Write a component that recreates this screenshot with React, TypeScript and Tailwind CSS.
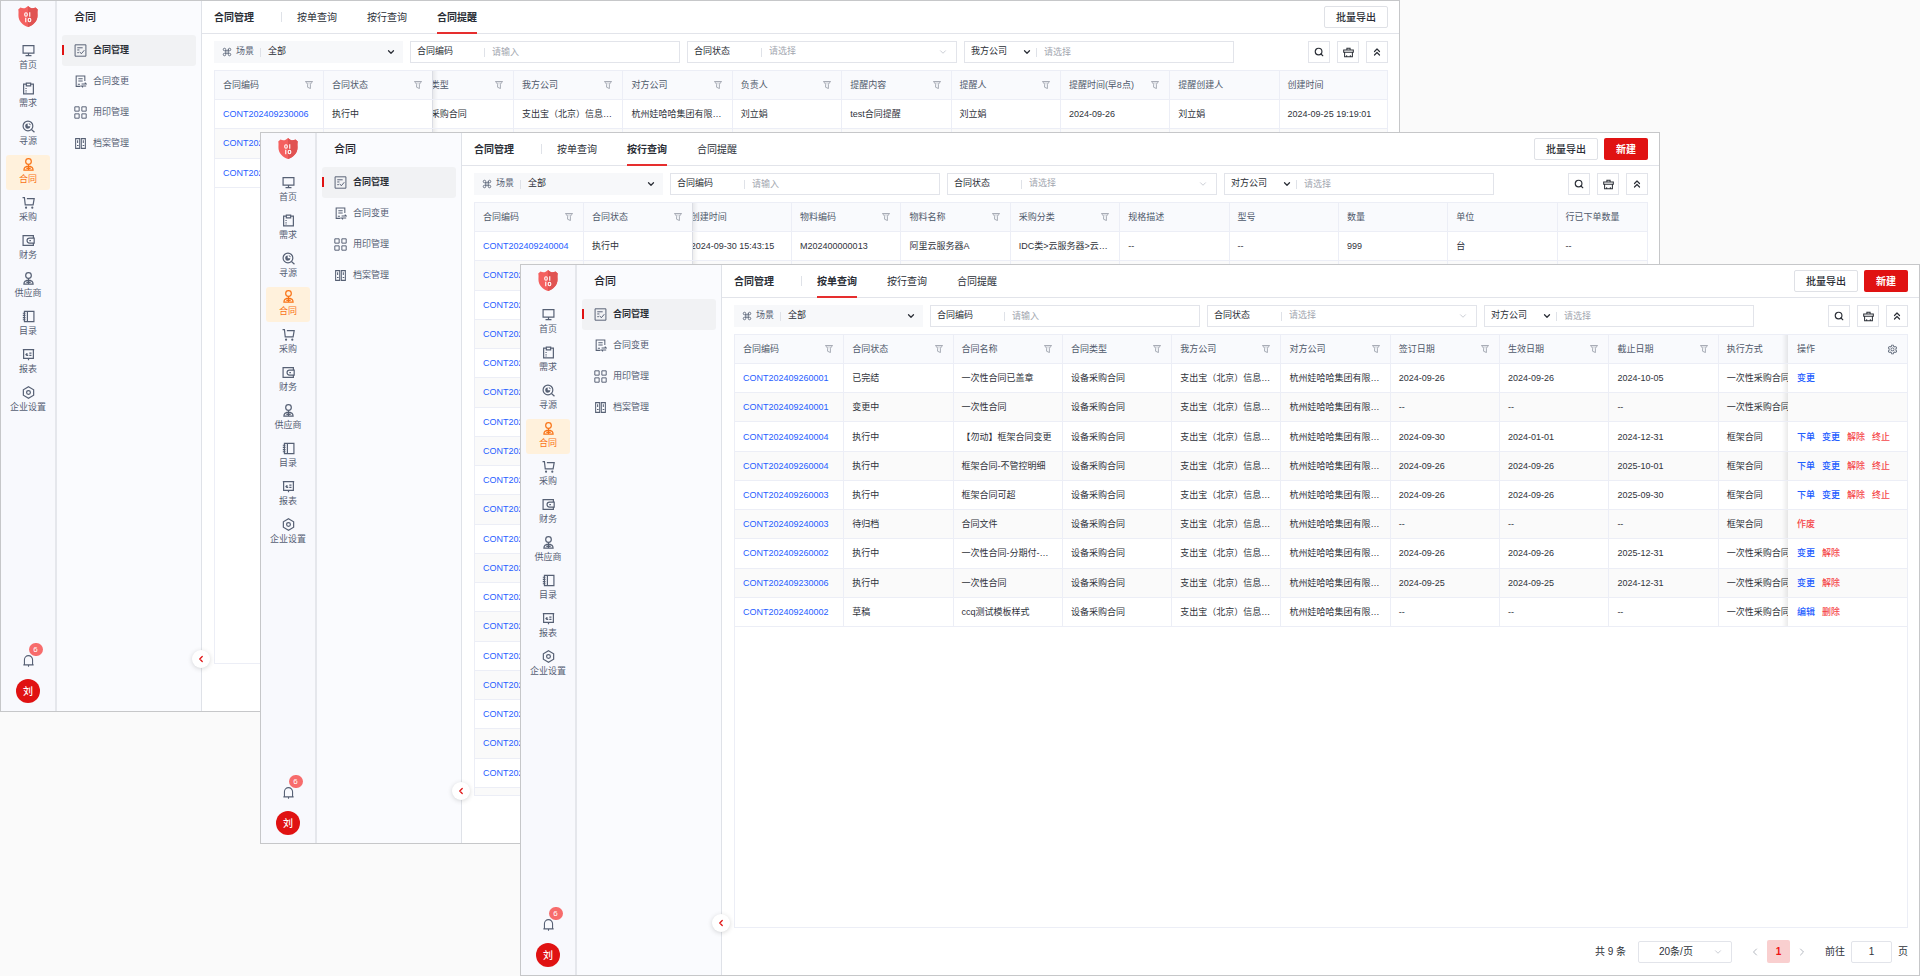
import { ReactNode, useId, useLayoutEffect, useRef } from "react";
import { ChevronDown, ChevronLeft, ChevronRight, ChevronsUp, Command, Search } from "lucide-react";
import { AiOutlineSetting } from "react-icons/ai";
import clsx from "clsx";

type Action = { label: string; danger?: boolean };
type Column = { title: string; filter?: boolean };
type Row = { cells: string[]; actions?: Action[] };

type WindowProps = {
  className: string;
  activeTab: string;
  companyField: string;
  canCreate?: boolean;
  columns: Column[];
  rows: Row[];
  tableClass: string;
  pinLeft?: boolean;
  scrollX?: number;
};

const tabs = ["按单查询", "按行查询", "合同提醒"];

const order: Action = { label: "下单" };
const change: Action = { label: "变更" };
const release: Action = { label: "解除", danger: true };
const stop: Action = { label: "终止", danger: true };

const us = "支出宝（北京）信息技术有限公司";
const them = "杭州娃哈哈集团有限公司";

function Svg({ children, className = "size-[13px]" }: { children: ReactNode; className?: string }) {
  return (
    <svg viewBox="0 0 24 24" fill="none" stroke="currentColor" strokeWidth="2.2" className={className} aria-hidden="true">
      {children}
    </svg>
  );
}

const personIcon = (
  <Svg>
    <circle cx="12" cy="6.5" r="5.2" />
    <path d="M12 12v3.500M8 15.500h8M3.500 22.500c0-4.500 2.500-7 8.500-7s8.500 2.500 8.500 7zM8 19h8M12 16v6.500" />
  </Svg>
);

const navItems: { label: string; icon: ReactNode }[] = [
  { label: "首页", icon: <Svg><path d="M2 3h20v14H2zM12 17v4M6.5 21.5h11" /></Svg> },
  { label: "需求", icon: <Svg><path d="M8 4H3v18h18V4h-5M8 2h8v5H8zM7.5 11v2M7.5 15v2M7.5 18v1.5" /></Svg> },
  {
    label: "寻源",
    icon: (
      <Svg>
        <circle cx="11" cy="11" r="9" />
        <path d="M17.5 17.5 23 22.5" />
        <path d="M10.500 6.500v5h5a4.800 4.800 0 1 1-5-5z" fill="currentColor" stroke="none" />
        <path d="M12.500 6.500a4 4 0 0 1 3 3" strokeWidth="1.800" />
      </Svg>
    ),
  },
  { label: "合同", icon: personIcon },
  {
    label: "采购",
    icon: (
      <Svg>
        <path d="M1 3h3.5l1.5 13.5h14.5L22.500 5H9" />
        <circle cx="7.500" cy="21.500" r=".9" />
        <circle cx="19" cy="21.500" r=".9" />
      </Svg>
    ),
  },
  {
    label: "财务",
    icon: (
      <Svg>
        <path d="M21 7.500V3H2v18h19v-4M22.500 7.500H14a4.700 4.700 0 0 0 0 9.400h8.500zM13.500 12.200h3" />
      </Svg>
    ),
  },
  { label: "供应商", icon: personIcon },
  { label: "目录", icon: <Svg><path d="M4.500 2.500H22v19H4.500zM10 2.500v19M1.500 6h5M1.500 10h5M1.500 14h5M1.500 18h5" /></Svg> },
  {
    label: "报表",
    icon: <Svg><path d="M1.500 3h21M3 3.500V19h18V3.500M12 19v3.500M9 9v4.500M6.500 11.500 9 13.500h2.500M13.500 9.500h4M13.500 13.500h4" /></Svg>,
  },
  {
    label: "企业设置",
    icon: (
      <Svg>
        <path d="M12 1.500 21.500 7v10L12 22.500 2.500 17V7z" />
        <circle cx="12" cy="12" r="3.500" />
      </Svg>
    ),
  },
];

const menuItems: { label: string; icon: ReactNode }[] = [
  {
    label: "合同管理",
    icon: (
      <Svg>
        <path d="M2 1.500h20v21H2zM6 7h10M6 11h4M6 16h3" strokeWidth="1.800" />
        <path d="m10.500 14.500 3 3.500 5.500-6.500" strokeWidth="1.800" />
      </Svg>
    ),
  },
  {
    label: "合同变更",
    icon: <Svg><path d="M20 11V2H4v19h8M8 7h8M8 11h8M7 17h4M14 16.500h8.500l-2.500-2.500M22.500 20.500H14l2.500 2.500" strokeWidth="1.900" /></Svg>,
  },
  {
    label: "用印管理",
    icon: <Svg><path d="M1.500 1.500h8v8h-8zM14.500 1.500h8v8h-8zM1.500 14.500h8v8h-8zM14.500 14.500h8v8h-8z" strokeWidth="1.800" /></Svg>,
  },
  {
    label: "档案管理",
    icon: <Svg><path d="M3 3h7.500v18H3zM13.500 3H21v18h-7.500zM6.700 6v5M17.200 6v5M5.500 15.500h3M16 15.500h3" strokeWidth="1.900" /></Svg>,
  },
];

function Logo() {
  return (
    <svg viewBox="0 0 40 42" className="h-[21px] w-5" role="img" aria-label="logo">
      <path d="M20 0c3.500 3.500 6 4.500 9 4.500 2.500 0 4-.5 6-1.500l4.500 4c-.8 3-.6 7-.4 11.500C39.500 30 31 38 20 42 9 38 .5 30 .9 18.500 1.100 14 1.300 10 .5 7L5 3c2 1 3.500 1.500 6 1.500 3 0 5.500-1 9-4.500z" fill="#f4605f" />
      <path d="M20 0c3.500 3.500 6 4.500 9 4.500 2.500 0 4-.5 6-1.500l4.500 4c-.8 3-.6 7-.4 11.500C39.500 30 31 38 20 42z" fill="#e05352" />
      <g fill="none" stroke="#fff" strokeWidth="2.200">
        <rect x="13.500" y="13.500" width="5" height="7" rx="2.500" />
        <path d="M23.500 12.500v9M15.500 23.500v9" />
        <rect x="20.500" y="24.500" width="5" height="7" rx="2.500" />
      </g>
    </svg>
  );
}

function FunnelIcon() {
  return (
    <svg viewBox="0 0 16 16" fill="none" stroke="#7b8290" strokeWidth="1.3" className="size-2 shrink-0" aria-hidden="true">
      <path d="M1 1h14l-4.200 5.500v8.500l-5.600-2.500v-6z" />
      <path d="M4 4h8" strokeWidth=".8" />
    </svg>
  );
}

function Rail() {
  return (
    <nav className="flex w-14 shrink-0 flex-col items-center border-r-2 border-[#e5e7ec] bg-[#f8f9fd] pt-[5px] pb-2 text-[#566074]">
      <Logo />
      <ul className="mt-[14px] flex flex-col gap-[3px]">
        {navItems.map(item => (
          <li key={item.label}>
            <a
              href="#"
              className={clsx(
                "flex h-[35px] w-11 flex-col items-center gap-0.5 rounded-[3px] pt-[3px] text-[9px] leading-3 whitespace-nowrap",
                item.label === "合同" && "bg-[#fff1dc] text-[#f97316]"
              )}
            >
              {item.icon}
              {item.label}
            </a>
          </li>
        ))}
      </ul>
      <button aria-label="消息" className="relative mt-auto">
        <Svg>
          <path d="M4.500 20V10.500a7.500 7.500 0 0 1 15 0V20M2.500 20h19M12 20v3.500" strokeWidth="2" />
        </Svg>
        <span className="absolute -top-[11px] left-[7px] flex h-[13px] w-[14px] items-center justify-center rounded-full bg-[#f76c6c] text-[8px] text-white">6</span>
      </button>
      <button className="mt-3 size-6 rounded-full bg-[#e01212] text-[10px] font-medium text-white">刘</button>
    </nav>
  );
}

function SideMenu() {
  return (
    <aside className="relative w-[145px] shrink-0 border-r border-[#dfe2e8] bg-[#fafbfe]">
      <h2 className="h-[34px] pl-[17px] text-[11px] leading-8 font-medium text-[#23262d]">合同</h2>
      <ul className="px-[5px]">
        {menuItems.map((item, i) => (
          <li key={item.label}>
            <a
              href="#"
              className={clsx(
                "relative flex h-[31px] items-center gap-1.5 rounded-[3px] pl-3 text-[9px] text-[#566074]",
                i === 0 && "bg-[#f1f2f4]"
              )}
            >
              {i === 0 && <span className="absolute top-[10px] left-0 h-[10px] w-0.5 bg-[#e01212]" />}
              {item.icon}
              <span className={clsx(i === 0 && "font-bold text-[#2a2e36]")}>{item.label}</span>
            </a>
          </li>
        ))}
      </ul>
      <button
        aria-label="收起"
        className="absolute -right-[9px] bottom-[43px] z-10 flex size-[18px] items-center justify-center rounded-full bg-white text-[#e01212] shadow-[0_1px_5px_rgba(0,0,0,0.16)]"
      >
        <ChevronLeft className="size-[10px]" strokeWidth={3} />
      </button>
    </aside>
  );
}

function Divider() {
  return <span className="h-[9px] w-px shrink-0 bg-[#dfe2e8]" />;
}

const fieldBox = "flex h-[22px] w-[270px] min-w-0 items-center border border-[#e2e4ea] bg-white pl-1.5";
const iconButton = "flex size-[22px] shrink-0 items-center justify-center border border-[#e2e4ea] bg-white text-[#2a2e36]";

function FilterBar({ companyField }: { companyField: string }) {
  const id = useId();
  return (
    <form className="flex items-center gap-[7px] pt-[7px] text-[9px] text-[#2a2e36]">
      <div className="relative flex h-[22px] w-[189px] min-w-0 items-center bg-[#f7f8fa] pl-2">
        <Command className="mr-1 size-[10px] text-[#566074]" />
        <label htmlFor={id + "scene"} className="mr-1.5 shrink-0 text-[#566074]">场景</label>
        <Divider />
        <select id={id + "scene"} className="h-full min-w-0 flex-1 appearance-none pl-[7px]">
          <option>全部</option>
        </select>
        <ChevronDown className="pointer-events-none absolute right-[7px] size-[10px]" strokeWidth={3} />
      </div>
      <div className={fieldBox}>
        <label htmlFor={id + "code"} className="w-[67px] shrink-0">合同编码</label>
        <Divider />
        <input id={id + "code"} placeholder="请输入" className="h-full min-w-0 flex-1 pl-[7px] outline-none placeholder:text-[#a3a7b0]" />
      </div>
      <div className={clsx(fieldBox, "relative")}>
        <label htmlFor={id + "status"} className="w-[67px] shrink-0">合同状态</label>
        <Divider />
        <select id={id + "status"} className="h-full min-w-0 flex-1 appearance-none pl-[7px] text-[#a3a7b0]">
          <option>请选择</option>
        </select>
        <ChevronDown className="pointer-events-none absolute right-2 size-[10px] text-[#c0c4cc]" />
      </div>
      <div className={fieldBox}>
        <div className="relative flex h-full w-[65px] shrink-0 items-center">
          <select aria-label="公司类型" className="h-full w-full appearance-none">
            <option>{companyField}</option>
          </select>
          <ChevronDown className="pointer-events-none absolute right-1 size-[10px]" strokeWidth={3} />
        </div>
        <Divider />
        <input aria-label={companyField} placeholder="请选择" className="h-full min-w-0 flex-1 pl-[7px] outline-none placeholder:text-[#a3a7b0]" />
      </div>
      <div className="ml-auto flex gap-[7px]">
        <button type="button" aria-label="搜索" className={iconButton}>
          <Search className="size-[10px]" strokeWidth={2.8} />
        </button>
        <button type="button" aria-label="清空" className={iconButton}>
          <Svg className="size-[11px]">
            <path d="M8.500 6V2.500h7V6M1.500 6.500h21v5h-21zM3.500 11.500v10h17v-10M8 18v3M16 18v3" />
          </Svg>
        </button>
        <button type="button" aria-label="收起筛选" className={iconButton}>
          <ChevronsUp className="size-3" strokeWidth={2.4} />
        </button>
      </div>
    </form>
  );
}

const pinFirst = "sticky left-0 z-10";
const pinSecond =
  "sticky left-[109px] z-10 after:absolute after:inset-y-0 after:left-full after:w-1.5 after:bg-linear-to-r after:from-black/8 after:to-transparent after:content-['']";
const pinAction =
  "sticky right-0 z-10 before:absolute before:inset-y-0 before:right-full before:w-1.5 before:bg-linear-to-l before:from-black/8 before:to-transparent before:content-['']";

function ContractTable({ columns, rows, tableClass, pinLeft, scrollX = 0 }: Pick<WindowProps, "columns" | "rows" | "tableClass" | "pinLeft" | "scrollX">) {
  const box = useRef<HTMLDivElement>(null);
  const hasActions = rows.some(r => r.actions);

  useLayoutEffect(() => {
    if (box.current) box.current.scrollLeft = scrollX;
  }, [scrollX]);

  const pin = (i: number) => (pinLeft && i === 0 ? pinFirst : pinLeft && i === 1 ? pinSecond : "truncate");

  return (
    <div ref={box} className="mt-[7px] min-h-0 flex-1 overflow-hidden border border-[#eceef6]">
      <table className={clsx("table-fixed border-separate border-spacing-0 text-left text-[9px] leading-3 text-[#2f333b]", tableClass)}>
        <thead>
          <tr>
            {columns.map((c, i) => (
              <th key={c.title} className={clsx("h-[29px] border-r border-b border-[#eceef6] bg-[#f9fafd] px-2 font-normal text-[#4f596b]", pin(i))}>
                <div className="flex items-center justify-between pr-0.5">
                  {c.title}
                  {c.filter && <FunnelIcon />}
                </div>
              </th>
            ))}
            {hasActions && (
              <th className={clsx("h-[29px] w-[119px] border-b border-[#eceef6] bg-[#f9fafd] px-[9px] font-normal text-[#4f596b]", pinAction)}>
                <div className="flex items-center justify-between">
                  操作
                  <AiOutlineSetting className="size-[11px]" />
                </div>
              </th>
            )}
          </tr>
        </thead>
        <tbody>
          {rows.map((r, n) => {
            const cell = clsx("h-[29px] border-b border-[#eceef6]", n % 2 ? "bg-[#fafafa]" : "bg-white");
            return (
              <tr key={n}>
                {columns.map((c, i) => (
                  <td key={c.title} className={clsx(cell, "border-r px-2", pin(i))}>
                    {i === 0 ? <a href="#" className="text-[#1f5eff]">{r.cells[0]}</a> : r.cells[i]}
                  </td>
                ))}
                {hasActions && (
                  <td className={clsx(cell, "px-[9px]", pinAction)}>
                    <div className="flex gap-[7px] font-medium">
                      {r.actions?.map(a => (
                        <button key={a.label} className={a.danger ? "text-[#f5474a]" : "text-[#1f5eff]"}>{a.label}</button>
                      ))}
                    </div>
                  </td>
                )}
              </tr>
            );
          })}
        </tbody>
      </table>
    </div>
  );
}

function Pagination({ total }: { total: number }) {
  const id = useId();
  return (
    <footer className="flex shrink-0 items-center justify-end py-3 text-[10px] text-[#2f333b]">
      <span>共 {total} 条</span>
      <div className="relative ml-3 flex h-[22px] w-[94px] items-center rounded-xs border border-[#e2e4ea]">
        <select aria-label="每页条数" className="h-full w-full appearance-none pl-5">
          <option>20条/页</option>
        </select>
        <ChevronDown className="pointer-events-none absolute right-2 size-[10px] text-[#c0c4cc]" />
      </div>
      <button aria-label="上一页" className="mr-1.5 ml-[17px] text-[#b4b8c0]"><ChevronLeft className="size-3" /></button>
      <button className="size-[23px] rounded-xs bg-[#f9cfcf] font-bold text-[#f01414]">1</button>
      <button aria-label="下一页" className="mr-[17px] ml-1.5 text-[#b4b8c0]"><ChevronRight className="size-3" /></button>
      <label htmlFor={id}>前往</label>
      <input id={id} defaultValue="1" className="mx-1.5 h-[22px] w-[41px] rounded-xs border border-[#e2e4ea] text-center outline-none" />
      <span>页</span>
    </footer>
  );
}

function ContractWindow({ className, activeTab, companyField, canCreate, ...table }: WindowProps) {
  return (
    <section className={clsx("absolute isolate flex overflow-hidden border border-[#c6c7c9] bg-white", className)}>
      <Rail />
      <SideMenu />
      <main className="flex min-w-0 flex-1 flex-col">
        <header className="flex h-[33px] shrink-0 items-center border-b border-[#e2e4ea] pr-[11px] pl-3 text-[10px] text-[#2a2e36]">
          <h1 className="font-bold">合同管理</h1>
          <span className="mr-[15px] ml-[27px] h-[10px] w-px bg-[#dfe2e8]" />
          <div role="tablist" className="flex h-[33px] gap-[30px]">
            {tabs.map(t => (
              <button
                key={t}
                role="tab"
                aria-selected={t === activeTab}
                className={clsx("border-b-2 pt-0.5", t === activeTab ? "border-[#e62e2e] font-bold" : "border-transparent")}
              >
                {t}
              </button>
            ))}
          </div>
          <div className="ml-auto flex gap-1.5">
            <button className="h-[22px] w-16 rounded-xs border border-[#dfe1e6] font-medium">批量导出</button>
            {canCreate && <button className="h-[22px] w-11 rounded-xs bg-[#e01212] font-bold text-white">新建</button>}
          </div>
        </header>
        <div className="flex min-h-0 flex-1 flex-col pr-[11px] pl-3">
          <FilterBar companyField={companyField} />
          <ContractTable {...table} />
          <Pagination total={table.rows.length} />
        </div>
      </main>
    </section>
  );
}

const remindColumns: Column[] = [
  { title: "合同编码", filter: true },
  { title: "合同状态", filter: true },
  { title: "合同类型", filter: true },
  { title: "我方公司", filter: true },
  { title: "对方公司", filter: true },
  { title: "负责人", filter: true },
  { title: "提醒内容", filter: true },
  { title: "提醒人", filter: true },
  { title: "提醒时间(早8点)", filter: true },
  { title: "提醒创建人" },
  { title: "创建时间" },
];

const remindRows: Row[] = [
  { cells: ["CONT202409230006", "执行中", "设备采购合同", us, them, "刘立娟", "test合同提醒", "刘立娟", "2024-09-26", "刘立娟", "2024-09-25 19:19:01"] },
  { cells: ["CONT202409230006"] },
  { cells: ["CONT202409230006"] },
];

const lineColumns: Column[] = [
  { title: "合同编码", filter: true },
  { title: "合同状态", filter: true },
  { title: "创建时间" },
  { title: "物料编码", filter: true },
  { title: "物料名称", filter: true },
  { title: "采购分类", filter: true },
  { title: "规格描述" },
  { title: "型号" },
  { title: "数量" },
  { title: "单位" },
  { title: "行已下单数量" },
];

const lineRows: Row[] = [
  { cells: ["CONT202409240004", "执行中", "2024-09-30 15:43:15", "M202400000013", "阿里云服务器A", "IDC类>云服务器>云主机", "--", "--", "999", "台", "--"] },
  ...Array.from({ length: 19 }, () => ({ cells: ["CONT202409240004"] })),
];

const orderColumns: Column[] = [
  { title: "合同编码", filter: true },
  { title: "合同状态", filter: true },
  { title: "合同名称", filter: true },
  { title: "合同类型", filter: true },
  { title: "我方公司", filter: true },
  { title: "对方公司", filter: true },
  { title: "签订日期", filter: true },
  { title: "生效日期", filter: true },
  { title: "截止日期", filter: true },
  { title: "执行方式" },
];

const kind = "设备采购合同";

const orderRows: Row[] = [
  { cells: ["CONT202409260001", "已完结", "一次性合同已盖章", kind, us, them, "2024-09-26", "2024-09-26", "2024-10-05", "一次性采购合同"], actions: [change] },
  { cells: ["CONT202409240001", "变更中", "一次性合同", kind, us, them, "--", "--", "--", "一次性采购合同"], actions: [] },
  { cells: ["CONT202409240004", "执行中", "【勿动】框架合同变更", kind, us, them, "2024-09-30", "2024-01-01", "2024-12-31", "框架合同"], actions: [order, change, release, stop] },
  { cells: ["CONT202409260004", "执行中", "框架合同-不管控明细", kind, us, them, "2024-09-26", "2024-09-26", "2025-10-01", "框架合同"], actions: [order, change, release, stop] },
  { cells: ["CONT202409260003", "执行中", "框架合同可超", kind, us, them, "2024-09-26", "2024-09-26", "2025-09-30", "框架合同"], actions: [order, change, release, stop] },
  { cells: ["CONT202409240003", "待归档", "合同文件", kind, us, them, "--", "--", "--", "框架合同"], actions: [{ label: "作废", danger: true }] },
  { cells: ["CONT202409260002", "执行中", "一次性合同-分期付-测试", kind, us, them, "2024-09-26", "2024-09-26", "2025-12-31", "一次性采购合同"], actions: [change, release] },
  { cells: ["CONT202409230006", "执行中", "一次性合同", kind, us, them, "2024-09-25", "2024-09-25", "2024-12-31", "一次性采购合同"], actions: [change, release] },
  { cells: ["CONT202409240002", "草稿", "ccq测试模板样式", kind, us, them, "--", "--", "--", "一次性采购合同"], actions: [{ label: "编辑" }, { label: "删除", danger: true }] },
];

export default function App() {
  return (
    <div className="relative h-screen min-h-[900px] overflow-hidden bg-[#fafafa] font-['Liberation_Sans','Noto_Sans_CJK_SC',sans-serif]">
      <ContractWindow
        className="top-0 right-[520px] bottom-[264px] left-0"
        activeTab="合同提醒"
        companyField="我方公司"
        columns={remindColumns}
        rows={remindRows}
        tableClass="h-[117px] w-[1203px]"
        pinLeft
        scrollX={29}
      />
      <ContractWindow
        className="top-[132px] right-[260px] bottom-[132px] left-[260px]"
        activeTab="按行查询"
        companyField="对方公司"
        canCreate
        columns={lineColumns}
        rows={lineRows}
        tableClass="h-[614px] w-[1203px]"
        pinLeft
        scrollX={11}
      />
      <ContractWindow
        className="top-[264px] right-0 bottom-0 left-[520px]"
        activeTab="按单查询"
        companyField="对方公司"
        canCreate
        columns={orderColumns}
        rows={orderRows}
        tableClass="h-[292px] w-[1212px]"
      />
    </div>
  );
}
